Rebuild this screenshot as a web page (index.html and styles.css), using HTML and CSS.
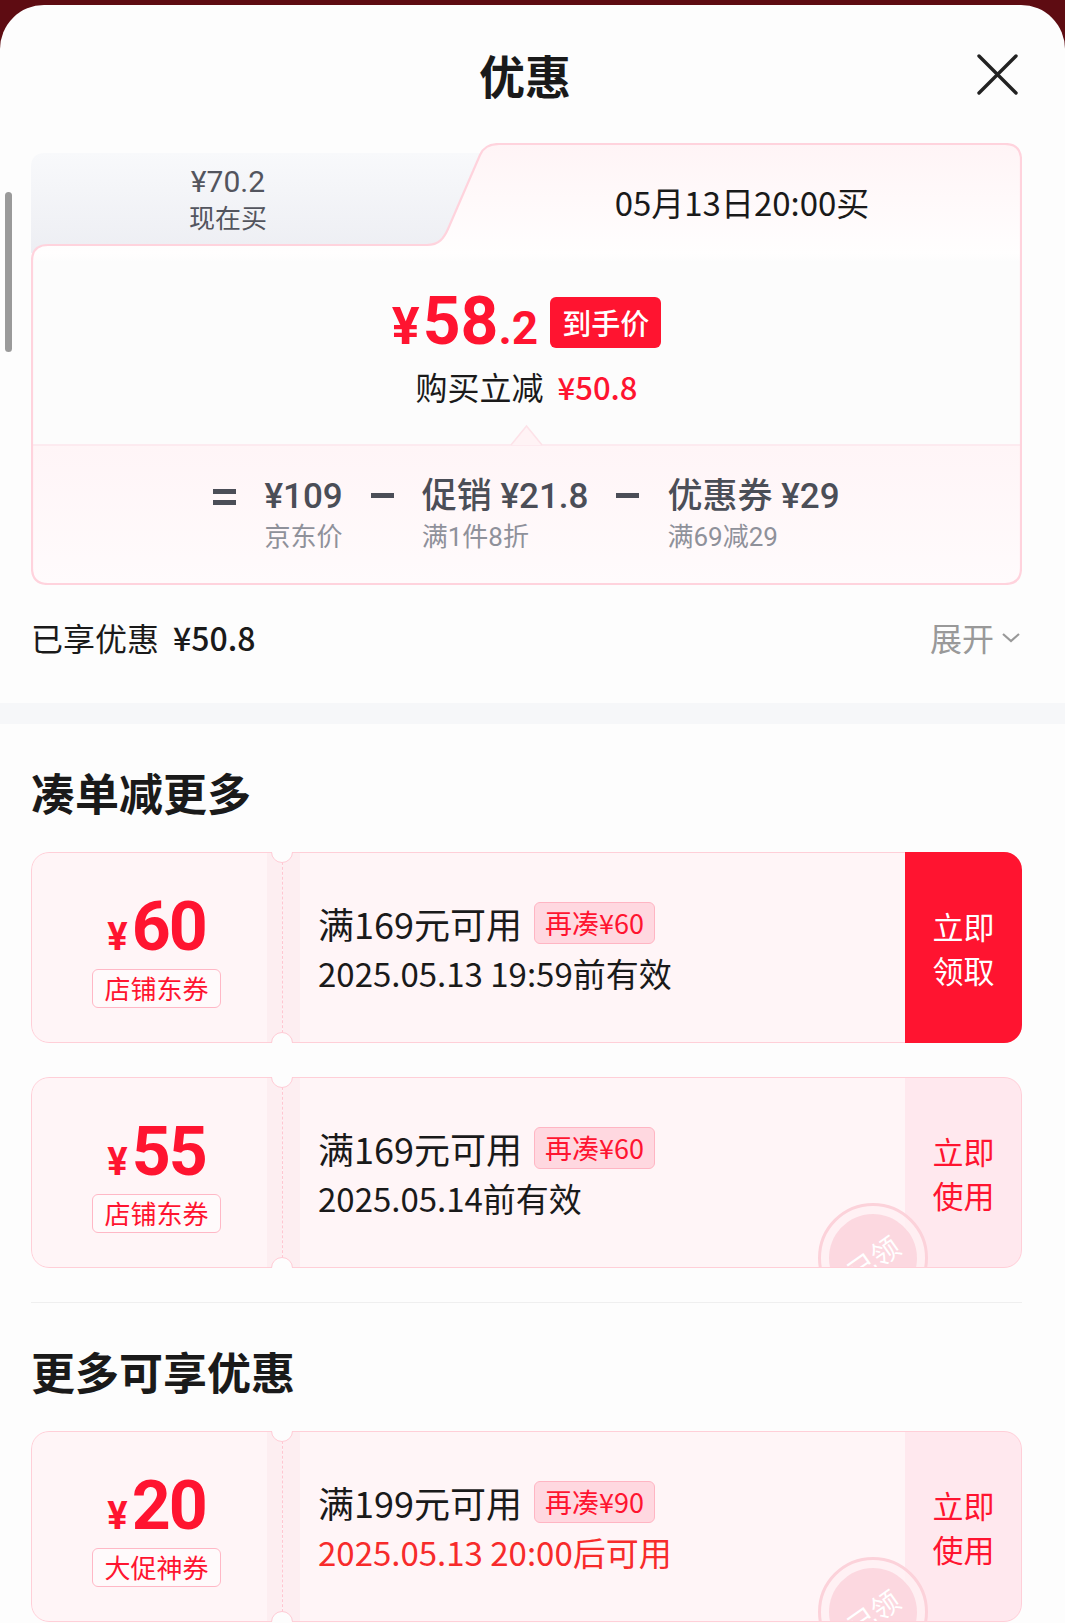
FILE: index.html
```html
<!DOCTYPE html>
<html lang="zh-CN">

<head>
  <meta charset="UTF-8" />
  <meta name="viewport" content="width=device-width, initial-scale=1.0" />
  <title>优惠</title>
  <link rel="stylesheet" href="styles.css">
</head>

<body>
  <div class="sheet">
    <div class="scrollbar"></div>

    <div class="header">
      <span></span>
      <h1 class="title">优惠</h1>
      <button class="close" aria-label="关闭">
        <svg width="43" height="43" viewBox="0 0 43 43">
          <path d="M3 3 L40 40 M40 3 L3 40" stroke="#222" stroke-width="3.4" stroke-linecap="round" />
        </svg>
      </button>
    </div>

    <!-- price box: tabs + final price + breakdown -->
    <div class="deal">
      <svg class="deal-bg" width="991" height="442" viewBox="0 0 991 442">
        <defs>
          <linearGradient id="gTab" x1="0" y1="0" x2="0" y2="1">
            <stop offset="0" stop-color="#f8f9fb" />
            <stop offset="1" stop-color="#edeef3" />
          </linearGradient>
          <linearGradient id="gCard" gradientUnits="userSpaceOnUse" x1="0" y1="0" x2="0" y2="442">
            <stop offset="0" stop-color="#fff4f6" />
            <stop offset="0.25" stop-color="#fffefe" />
            <stop offset="0.27" stop-color="#fcfcfc" />
            <stop offset="1" stop-color="#fcfcfc" />
          </linearGradient>
          <linearGradient id="gBottom" x1="0" y1="0" x2="0" y2="1">
            <stop offset="0" stop-color="#fff5f7" />
            <stop offset="1" stop-color="#fffbfc" />
          </linearGradient>
        </defs>
        <path d="M0,24 Q0,10 14,10 L452,10 L452,110 L0,110 Z" fill="url(#gTab)" />
        <path d="M1,118 Q1,102 17,102 L396,102 C408,102 413,95 417,86 L449,12 C452,5 457,1 468,1 L974,1 Q990,1 990,17 L990,425 Q990,441 974,441 L17,441 Q1,441 1,425 Z" fill="url(#gCard)" />
        <path d="M1,302 L990,302 L990,425 Q990,441 974,441 L17,441 Q1,441 1,425 Z" fill="url(#gBottom)" />
        <line x1="1" y1="302" x2="990" y2="302" stroke="#fde6ec" stroke-width="1.5" />
        <path d="M480,302 L495.5,283 L511,302" fill="#fff3f5" stroke="#fde2e8" stroke-width="1.5" />
        <path d="M1,118 Q1,102 17,102 L396,102 C408,102 413,95 417,86 L449,12 C452,5 457,1 468,1 L974,1 Q990,1 990,17 L990,425 Q990,441 974,441 L17,441 Q1,441 1,425 Z" fill="none" stroke="#ffd3dd" stroke-width="2.2" />
      </svg>

      <div class="deal-content">
        <div class="tabs">
          <div class="tab-now">
            <div class="tab-price">¥70.2</div>
            <div class="tab-label">现在买</div>
          </div>
          <div class="tab-later">05月13日20:00买</div>
        </div>

        <div class="final">
          <div class="final-row">
            <span class="final-price"><span class="yen">¥</span>58<span class="dec">.2</span></span>
            <span class="final-badge">到手价</span>
          </div>
          <div class="final-sub">购买立减<span class="red">¥50.8</span></div>
        </div>

        <div class="breakdown">
          <div class="op op-eq"></div>
          <div class="item">
            <div class="val">¥109</div>
            <div class="lbl">京东价</div>
          </div>
          <div class="op op-minus"></div>
          <div class="item">
            <div class="val">促销 ¥21.8</div>
            <div class="lbl">满1件8折</div>
          </div>
          <div class="op op-minus"></div>
          <div class="item">
            <div class="val">优惠券 ¥29</div>
            <div class="lbl">满69减29</div>
          </div>
        </div>
      </div>
    </div>

    <div class="saved">
      <div class="saved-label">已享优惠<span class="saved-amount">¥50.8</span></div>
      <div class="expand">展开
        <svg width="22" height="13" viewBox="0 0 22 13">
          <path d="M3 3 L11 10 L19 3" fill="none" stroke="#999" stroke-width="2.2" />
        </svg>
      </div>
    </div>

    <div class="band"></div>

    <h2 class="sec-title">凑单减更多</h2>

    <div class="coupon">
      <div class="stub">
        <div class="amount"><span class="amount-yen">¥</span>60</div>
        <div class="stub-tag">店铺东券</div>
      </div>
      <div class="info">
        <div class="cond">满169元可用<span class="gap-tag">再凑¥60</span></div>
        <div class="valid">2025.05.13 19:59前有效</div>
      </div>
      <div class="action action-get">立即<br>领取</div>
    </div>

    <div class="coupon coupon-next">
      <div class="stub">
        <div class="amount"><span class="amount-yen">¥</span>55</div>
        <div class="stub-tag">店铺东券</div>
      </div>
      <div class="info">
        <div class="cond">满169元可用<span class="gap-tag">再凑¥60</span></div>
        <div class="valid">2025.05.14前有效</div>
      </div>
      <div class="action action-use">立即<br>使用</div>
      <div class="stamp"><span>已领</span></div>
    </div>

    <div class="divider"></div>

    <h2 class="sec-title">更多可享优惠</h2>

    <div class="coupon">
      <div class="stub">
        <div class="amount"><span class="amount-yen">¥</span>20</div>
        <div class="stub-tag">大促神券</div>
      </div>
      <div class="info">
        <div class="cond">满199元可用<span class="gap-tag">再凑¥90</span></div>
        <div class="valid valid-red">2025.05.13 20:00后可用</div>
      </div>
      <div class="action action-use">立即<br>使用</div>
      <div class="stamp"><span>已领</span></div>
    </div>
  </div>
</body>

</html>
```

FILE: styles.css
```css
body {
  margin: 0;
  padding: 0;
  background: #5e0c12;
  font-family: "Noto Sans CJK SC", "Noto Sans", sans-serif;
  color: #1a1a1a;
}

.sheet {
  position: relative;
  margin-top: 5px;
  min-height: 1618px;
  background: #fdfdfd;
  border-radius: 44px 44px 0 0;
  overflow: hidden;
}

.scrollbar {
  position: absolute;
  left: 5px;
  top: 187px;
  width: 7px;
  height: 160px;
  border-radius: 4px;
  background: #9a9a9a;
}

/* header */
.header {
  display: grid;
  grid-template-columns: 1fr auto 1fr;
  align-items: center;
  height: 138px;
  padding: 0 46px 0 31px;
}

.title {
  margin: 0;
  font-size: 46px;
  line-height: 1;
  font-weight: 700;
}

.close {
  justify-self: end;
  padding: 0;
  border: 0;
  background: none;
  width: 43px;
  height: 43px;
}

.close svg {
  display: block;
}

/* price box */
.deal {
  position: relative;
  height: 442px;
  margin: 0 43px 0 31px;
}

.deal-bg {
  position: absolute;
  left: 0;
  top: 0;
}

.deal-content {
  position: relative;
}

.tabs {
  display: flex;
  height: 115px;
}

.tab-now {
  width: 394px;
  padding-top: 22px;
  box-sizing: border-box;
  text-align: center;
  color: #53555e;
}

.tab-price {
  font-family: Roboto, "Noto Sans CJK SC", sans-serif;
  font-size: 30px;
  line-height: 33px;
}

.tab-label {
  font-size: 26px;
  line-height: 37px;
}

.tab-later {
  flex: 1;
  display: flex;
  align-items: center;
  justify-content: center;
  padding: 3px 0 0 37px;
  font-size: 33px;
  color: #1a1a1a;
}

.final {
  height: 187px;
  padding-top: 32px;
  box-sizing: border-box;
}

.final-row {
  display: flex;
  justify-content: center;
  align-items: center;
  height: 64px;
}

.final-price {
  font-family: Roboto, "Liberation Sans", sans-serif;
  font-weight: 700;
  font-size: 66px;
  line-height: 1;
  color: #ff1430;
}

.final-price .yen {
  font-size: 52px;
  margin-right: 3px;
}

.final-price .dec {
  font-size: 46px;
}

.final-badge {
  margin-left: 12px;
  height: 51px;
  padding: 0 12px;
  border-radius: 6px;
  background: #ff1430;
  color: #fff;
  font-size: 29px;
  line-height: 51px;
  font-weight: 500;
}

.final-sub {
  margin-top: 12px;
  text-align: center;
  font-size: 32px;
  line-height: 40px;
}

.final-sub .red {
  margin-left: 14px;
  color: #ff1430;
  font-size: 31px;
  font-weight: 500;
}

.breakdown {
  display: flex;
  justify-content: center;
  gap: 28px;
  height: 140px;
  padding-top: 32px;
  box-sizing: border-box;
  font-family: Roboto, "Noto Sans CJK SC", sans-serif;
}

.val {
  font-size: 35px;
  line-height: 40px;
  font-weight: 500;
  color: #4b4e57;
  white-space: nowrap;
}

.lbl {
  margin-top: 4px;
  font-size: 26px;
  line-height: 32px;
  color: #8f919a;
}

.op {
  width: 23px;
  height: 40px;
}

.op-minus {
  background: linear-gradient(#4b4e57, #4b4e57) 0 16px / 23px 5px no-repeat;
}

.op-eq {
  background:
    linear-gradient(#4b4e57, #4b4e57) 0 12px / 23px 5px no-repeat,
    linear-gradient(#4b4e57, #4b4e57) 0 23px / 23px 5px no-repeat;
}

/* saved row */
.saved {
  display: flex;
  justify-content: space-between;
  align-items: center;
  height: 104px;
  margin: 0 43px 14px 31px;
}

.saved-label {
  font-size: 32px;
}

.saved-amount {
  margin-left: 14px;
  font-weight: 500;
}

.expand {
  display: flex;
  align-items: center;
  gap: 6px;
  font-size: 32px;
  color: #999;
}

.band {
  height: 21px;
  background: #f6f7f9;
}

.sec-title {
  margin: 38px 43px 30px 31px;
  font-size: 44px;
  line-height: 60px;
  font-weight: 600;
}

.divider {
  height: 1px;
  margin: 34px 43px 0 31px;
  background: #efefef;
}

/* coupons */
.coupon {
  position: relative;
  z-index: 0;
  display: flex;
  height: 191px;
  margin: 0 43px 0 31px;
  border-radius: 18px;
  background: #fff5f7;
  overflow: hidden;
}

.coupon-next {
  margin-top: 34px;
}

.coupon::after {
  content: "";
  position: absolute;
  inset: 0;
  border: 1.5px solid #ffcfd8;
  border-radius: 18px;
  pointer-events: none;
  z-index: 1;
}

.stub {
  position: relative;
  flex: none;
  width: 252px;
  box-sizing: border-box;
  display: flex;
  flex-direction: column;
  align-items: center;
  background: linear-gradient(to right, #fff5f7 236px, #fdeef1 236px);
  border-right: 1.5px dashed #ffc6d1;
}

.stub::before,
.stub::after {
  content: "";
  position: absolute;
  left: 240px;
  width: 22px;
  height: 22px;
  box-sizing: border-box;
  border-radius: 50%;
  border: 1.5px solid #ffcbd5;
  background: #fdfdfd;
  z-index: 2;
}

.stub::before {
  top: -11px;
}

.stub::after {
  bottom: -11px;
}

.amount {
  margin-top: 40px;
  font-family: Roboto, "Liberation Sans", sans-serif;
  font-weight: 700;
  font-size: 68px;
  line-height: 70px;
  letter-spacing: -2px;
  color: #ff1430;
}

.amount-yen {
  font-size: 38px;
  margin-right: 4px;
  letter-spacing: 0;
}

.stub-tag {
  margin-top: -3px;
  height: 39px;
  padding: 0 11px;
  box-sizing: border-box;
  border: 1.5px solid #ffb8c6;
  border-radius: 6px;
  background: #fffafb;
  font-size: 26px;
  line-height: 36px;
  color: #ff1430;
}

.info {
  flex: 1;
  padding: 48px 0 0 35px;
  background: linear-gradient(to right, #fdeef1 17px, #fff5f7 17px);
}

.cond {
  display: flex;
  align-items: center;
  height: 46px;
  font-size: 36px;
}

.gap-tag {
  margin-left: 12px;
  height: 42px;
  padding: 0 10px;
  box-sizing: border-box;
  border: 1.5px solid #ffb5c3;
  border-radius: 6px;
  background: #ffd8e0;
  font-size: 27px;
  line-height: 39px;
  color: #ff1430;
}

.valid {
  margin-top: 5px;
  font-size: 33px;
  line-height: 44px;
}

.valid-red {
  color: #f72b2b;
}

.action {
  flex: none;
  width: 117px;
  display: flex;
  align-items: center;
  justify-content: center;
  text-align: center;
  font-size: 31px;
  line-height: 44px;
}

.action-get {
  position: relative;
  z-index: 3;
  background: #ff1430;
  color: #fff;
}

.action-use {
  background: #ffe8ee;
  color: #ff1430;
}

/* "已领" stamp, cut by the coupon edge */
.stamp {
  position: absolute;
  left: 787px;
  top: 126px;
  width: 110px;
  height: 110px;
  box-sizing: border-box;
  border-radius: 50%;
  border: 3px solid #fcd2da;
  background: rgba(255, 240, 243, 0.8);
  display: flex;
  align-items: center;
  justify-content: center;
  z-index: 0;
}

.stamp span {
  width: 88px;
  height: 88px;
  border-radius: 50%;
  background: rgba(251, 210, 219, 0.8);
  color: #fff;
  font-size: 28px;
  display: flex;
  align-items: center;
  justify-content: center;
  transform: rotate(-35deg);
}
```
